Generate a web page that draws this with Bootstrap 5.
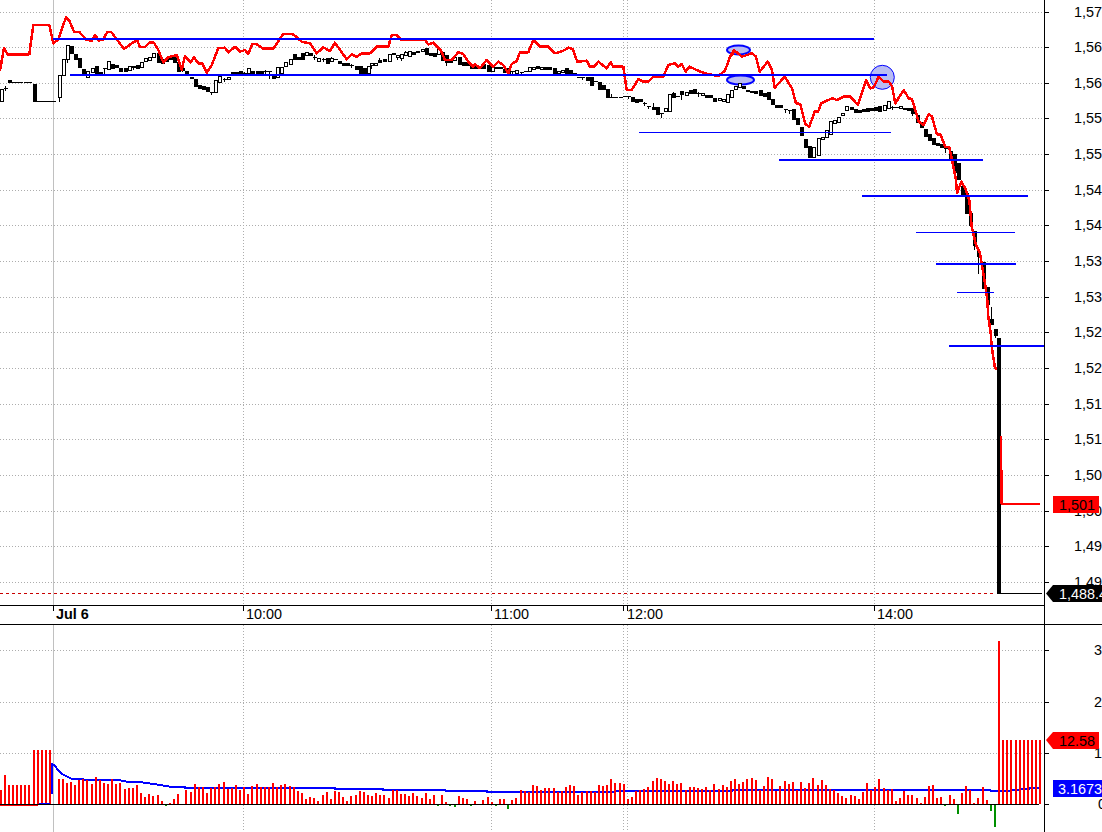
<!DOCTYPE html>
<html lang="en">
<head>
<meta charset="utf-8">
<title>Jul 6 intraday chart</title>
<link href="https://cdn.jsdelivr.net/npm/bootstrap@5.3.0/dist/css/bootstrap.min.css" rel="stylesheet">
<style>
html,body{margin:0;background:#fff;overflow:hidden}
.chart-frame{width:1102px;height:832px}
.chart-frame svg{width:1102px;height:832px}
.chart-frame text{font-family:"Liberation Sans",Arial,sans-serif;font-size:14.4px;dominant-baseline:central;fill:#000}
.chart-frame text.tb{font-weight:700}
.chart-frame text.tw{fill:#fff}
.grid-dot{stroke:#adadad;stroke-width:1;stroke-dasharray:1 2;fill:none;shape-rendering:crispEdges}
.axis-l{stroke:#000;stroke-width:1;fill:none;shape-rendering:crispEdges}
.first-day{stroke:#c0c0c0;stroke-width:1;shape-rendering:crispEdges}
.lvl{stroke:#0000ff;fill:none;shape-rendering:crispEdges}
.lvl-2{stroke-width:2}
.lvl-1{stroke-width:1}
.spot{fill:#b9bcf2;stroke:#0000ff}
.redline{stroke:#ff0000;stroke-width:2.5;fill:none;stroke-linejoin:round;shape-rendering:crispEdges}
.redline-thin{stroke:#ff0000;stroke-width:2;fill:none;shape-rendering:crispEdges}
.volma{stroke:#0000ff;stroke-width:2;fill:none;shape-rendering:crispEdges}
.crisp{shape-rendering:crispEdges}
.dash-last{stroke:#c80000;stroke-width:1;stroke-dasharray:3 3;shape-rendering:crispEdges}
</style>
</head>
<body>
<div class="chart-frame bg-white position-relative overflow-hidden">
<svg class="d-block" viewBox="0 0 1102 832" xmlns="http://www.w3.org/2000/svg">
  <g id="grid"></g>
  <line class="first-day" x1="53.5" y1="0" x2="53.5" y2="605"/>
  <line class="first-day" x1="53.5" y1="624" x2="53.5" y2="832"/>
  <ellipse class="spot" stroke-width="2" cx="738.5" cy="50" rx="11.5" ry="4.5"/>
  <ellipse class="spot" stroke-width="2" cx="740.5" cy="80" rx="13.5" ry="4.5"/>
  <circle class="spot" stroke-width="1" cx="882.3" cy="77.3" r="12"/>
  <line class="dash-last" x1="0" y1="593.5" x2="996" y2="593.5"/>
  <g id="candles" class="crisp"></g>
  <polyline id="red" class="redline"/>
  <path class="redline-thin" d="M1001 436V504"/>
  <path class="redline-thin" d="M1002 470V504H1040"/>
  <path class="axis-l" d="M997 593.5H1042"/>
  <g id="levels">
    <line class="lvl lvl-2" x1="53" y1="39" x2="874" y2="39"/>
    <line class="lvl lvl-2" x1="70" y1="75" x2="887" y2="75"/>
    <line class="lvl lvl-1" x1="639" y1="132.5" x2="891" y2="132.5"/>
    <line class="lvl lvl-2" x1="779" y1="160" x2="983" y2="160"/>
    <line class="lvl lvl-2" x1="862" y1="196" x2="1028" y2="196"/>
    <line class="lvl lvl-1" x1="916" y1="232.5" x2="1015" y2="232.5"/>
    <line class="lvl lvl-2" x1="936" y1="264" x2="1016" y2="264"/>
    <line class="lvl lvl-1" x1="957" y1="292.5" x2="994" y2="292.5"/>
    <line class="lvl lvl-2" x1="949" y1="346" x2="1044" y2="346"/>
  </g>
  <path id="volma" class="volma"/>
  <g id="vol" class="crisp"></g>
  <path class="axis-l" d="M0 804.5H1039" stroke-width="1"/>
  <rect class="crisp" x="0" y="805" width="38" height="1" fill="#ff0000"/>
  <rect class="crisp" x="39" y="803" width="11" height="1" fill="#0000ff"/>
  <path class="axis-l" d="M1044.5 0V832M0 605.5H1044.5M0 624.5H1102"/>
  <path id="ticks" class="axis-l"/>
  <g id="labels"></g>
  <text x="56" y="614" class="tb">Jul 6</text>
  <text x="246" y="614">10:00</text>
  <text x="494" y="614">11:00</text>
  <text x="627" y="614">12:00</text>
  <text x="877" y="614">14:00</text>
  <text x="1094" y="650">30</text>
  <text x="1094" y="702">20</text>
  <text x="1094" y="753">10</text>
  <text x="1098" y="804">0</text>
  <rect class="crisp" x="1053" y="496" width="46" height="17" fill="#ff0000"/>
  <text x="1059" y="505">1,501</text>
  <polygon points="1046,593.5 1053,585 1102,585 1102,602 1053,602" fill="#000"/>
  <text x="1059" y="594" class="tw">1,488.4</text>
  <polygon points="1046,740 1053,732 1099,732 1099,749 1053,749" fill="#ff0000"/>
  <text x="1059" y="741">12.58</text>
  <rect class="crisp" x="1053" y="780" width="49" height="17" fill="#0000ff"/>
  <text x="1058" y="788.5" class="tw">3.1673</text>
</svg>
</div>
<script src="https://cdn.jsdelivr.net/npm/bootstrap@5.3.0/dist/js/bootstrap.bundle.min.js"></script>
<script>
(function(){
  var ys=[];for(var i=0;i<17;i++)ys.push(Math.round(11.5+i*35.65));
  var lowY=[650,702,753];
  var vx=[243,491,623,627,874];
  var g='',t='',l='';
  ys.forEach(function(y,i){
    g+='<line class="grid-dot" x1="0" x2="1044" y1="'+(y+.5)+'" y2="'+(y+.5)+'"/>';
    t+='M1045 '+(y+.5)+'H1049';
    var v=570-i*5;
    l+='<text x="1074" y="'+y+'">1,'+v+'</text>';
  });
  lowY.forEach(function(y){g+='<line class="grid-dot" x1="0" x2="1044" y1="'+(y+.5)+'" y2="'+(y+.5)+'"/>';t+='M1045 '+(y+.5)+'H1049';});
  t+='M1045 804.5H1049';
  vx.forEach(function(x){
    g+='<line class="grid-dot" x1="'+(x+.5)+'" x2="'+(x+.5)+'" y1="0" y2="605"/>';
    g+='<line class="grid-dot" x1="'+(x+.5)+'" x2="'+(x+.5)+'" y1="625" y2="832"/>';
    t+='M'+(x+.5)+' 605V611';
  });
  t+='M53.5 605V611';
  document.getElementById('grid').innerHTML=g;
  document.getElementById('ticks').setAttribute('d',t);
  document.getElementById('labels').innerHTML=l;

  /* red price line, sampled per crop: [x,y] in 3x units */
  function pts(ox,oy,a){var o=[];for(var i=0;i<a.length;i+=2)o.push((ox+a[i]/3).toFixed(1)+','+(oy+a[i+1]/3).toFixed(1));return o;}
  var r=[].concat(
   pts(0,0,[0,212,12,143,22,163,88,163,100,75,148,75,160,130,175,118,198,52,208,62,222,95,238,96,260,120,276,122,285,104,296,122,310,118,322,96,334,96,372,147,400,127,412,122,420,141,435,141,448,128,462,128,475,150,490,187,505,172,530,165,545,210,555,168,572,187,582,172,595,190,607,190,620,218,635,195,655,145,675,143,685,157,705,140,720,155,735,150,745,162,757,132,768,132,790,146,820,146,850,102,880,103,905,125,930,130,950,160,970,142,990,153,1005,128,1040,178,1055,163,1070,170,1085,160,1110,160]),
   pts(370,0,[20,140,55,140,65,105,80,105,95,120,165,120,175,133,190,128,212,150,225,180,245,180,265,157,280,162,295,185,310,200,315,192,330,205,350,180,370,200,385,185,400,195,415,220,425,192,440,183,450,157,475,157,490,120,510,140,535,140,555,160,580,152,595,143,608,147,622,185,650,182,660,200,672,200,685,185,710,205,722,187,730,200,760,200,770,270,785,270,805,238,820,245,835,245,850,230,880,230,895,195,915,190,925,200,935,192,947,215,958,200,985,212,1005,220,1045,228,1065,212,1080,170,1092,150]),
   pts(732,0,[0,165,8,152,30,170,60,160,72,170,83,215,107,185,120,210,128,263,158,230,180,265,192,310,205,312,220,372,232,380,248,335,258,335,268,310,300,295,315,300,335,290,355,290,378,315,402,240,415,265,425,262,440,230,455,245,470,245,480,258,490,310,515,270,530,295,540,297,560,365,575,375,590,342,600,350,615,403,625,403,640,440,652,442,660,480,672,540,675,580,688,545,700,565,712,600]),
   pts(900,200,[215,80,228,135,240,160,255,250,262,300,265,350,272,400,275,440,285,505,292,505])
  );
  document.getElementById('red').setAttribute('points',r.join(' '));

  /* candles: x,top,bottom,filled,[wickTop,wickBottom] in 3x units */
  var C0=[[3,268,304,0],[14,263,263,1,255,270],[27,240,247,1],[101,252,304,1],[176,226,292,0,226,304],[189,178,226,0],[201,136,178,0,136,185],[212,138,158,1],[225,162,177,1],[237,174,200,1],[250,208,222,1],[262,214,232,0],[275,205,215,0],[288,198,218,1],[300,216,222,1],[312,205,205,1,205,218],[324,183,207,0],[336,192,205,1],[348,196,200,1],[360,205,212,1],[375,205,212,1],[387,198,210,0],[399,198,202,1,194,206],[411,195,203,1],[423,187,200,0],[435,175,183,0],[447,172,180,0],[459,160,172,0],[474,158,187,1],[486,178,188,1],[498,178,184,1],[510,172,178,1],[522,172,186,1],[534,187,212,1],[546,205,210,1,198,214],[558,213,221,1],[573,231,235,1],[585,236,257,1],[597,254,265,1],[609,258,266,1],[621,262,272,1],[633,275,275,1,272,282],[645,240,275,0],[657,228,245,0],[672,237,237,1,230,242],[684,232,238,0],[696,215,220,1],[708,215,220,1],[720,212,220,1],[732,218,218,1,212,224],[744,205,218,0],[756,212,220,1],[771,213,220,1],[783,212,220,1],[795,212,212,1,208,224],[807,212,212,1,212,235],[819,225,235,1],[831,202,230,0],[843,202,220,0],[855,187,197,0],[870,178,193,0],[882,163,177,1],[894,170,176,1],[906,160,176,1],[918,157,166,0,152,166],[930,160,166,1],[942,170,170,1,162,178],[954,175,184,0],[969,178,178,1,170,184],[981,175,190,1],[993,175,182,0,168,182],[1005,178,178,1],[1017,183,190,1],[1029,190,194,1],[1041,190,194,1],[1053,195,195,1,190,202],[1068,198,207,1],[1080,198,218,1],[1092,205,218,1],[1104,198,218,0]];
  var C1=[[3,190,195,0,190,205],[15,188,194,0],[28,180,187,1,172,187],[42,178,182,1],[57,163,182,0],[69,160,163,1],[81,165,172,0,165,178],[93,163,174,0,163,180],[105,155,165,0,150,165],[117,152,167,0],[129,155,162,1],[141,152,155,1],[156,148,153,0],[168,145,163,1],[180,160,164,1],[192,160,167,1],[204,147,163,0],[216,155,180,1],[228,165,187,1,165,195],[240,182,186,1],[252,172,180,0],[267,172,192,1],[279,187,195,1],[291,187,195,1],[303,195,203,1],[315,198,205,1],[327,198,205,1],[339,192,205,1],[354,195,212,1],[366,200,212,0],[378,200,205,1],[390,200,205,1],[402,207,216,1],[414,205,222,0],[426,212,212,1,212,220],[438,210,218,0],[453,215,215,1,215,222],[465,212,212,1],[477,202,212,0],[489,200,207,0],[501,197,205,1],[513,200,207,0],[525,202,208,1],[537,202,208,1],[552,205,222,1],[564,212,218,0],[576,210,215,0],[588,205,222,1],[600,210,222,1],[612,220,220,1],[624,230,230,1],[636,230,230,1,230,237],[651,230,240,1],[663,232,255,1],[675,243,243,1],[687,245,267,1],[699,255,267,1],[711,268,290,1],[723,292,292,1,280,292],[735,292,292,1],[750,292,292,1],[762,287,287,1],[774,287,287,1,287,295],[786,290,302,1],[798,298,305,1],[810,297,303,1],[822,310,310,1,303,316],[834,318,318,1,318,323],[849,322,328,1,305,328],[861,322,342,1],[873,338,338,1,338,352],[885,325,332,0],[897,283,332,0],[909,280,290,1,272,290],[921,288,288,1],[933,273,282,1,273,296],[948,275,285,0],[960,270,280,1],[972,268,280,1],[984,278,278,1,272,288],[996,278,285,0],[1008,285,290,1],[1020,285,290,1],[1032,295,302,1],[1047,293,300,0],[1059,298,304,0],[1071,283,307,0],[1083,270,290,0]];
  var C2=[[9,258,268,0],[20,250,262,0],[33,257,265,1],[45,270,274,1],[57,273,276,1],[69,272,280,1],[84,270,285,1],[96,280,287,1],[108,275,297,1],[120,296,312,1],[132,316,320,1],[144,316,320,1],[159,328,328,1,328,336],[171,330,330,1,330,338],[183,328,358,1],[195,355,373,1],[207,382,404,1],[219,418,440,1],[231,438,472,1],[243,440,472,0],[258,415,465,0],[270,410,418,0],[282,390,412,0],[294,362,402,0],[306,360,368,0],[318,350,366,0],[330,338,345,0],[342,318,330,0],[357,320,328,1],[369,327,335,1],[381,330,336,1],[393,327,333,1],[405,325,332,1],[417,325,330,1],[429,322,330,1],[441,318,333,1],[456,316,330,0],[468,304,325,0],[480,320,320,1,314,326],[492,322,322,1],[504,318,324,0],[516,323,327,1],[528,325,330,1],[540,325,340,1,325,346],[555,345,365,1],[567,365,382,1],[579,388,408,1],[591,402,420,1],[603,415,433,1],[615,430,435,1],[627,433,440,1],[639,437,443,1,437,455],[654,454,478,1],[666,463,515,1],[678,490,538,1],[690,558,585,1],[702,580,600,1]];
  var C3=[[198,-21,40,1],[210,40,76,1],[222,94,136,1,94,146],[234,152,168,1,152,220],[249,187,265,1],[261,262,312,1],[273,356,372,1,318,372],[285,388,406,1,388,412]];
  var s='';
  function dc(ox,oy,a){
    a.forEach(function(c){
      var x=Math.round(ox+c[0]/3)+.5,t=Math.round(oy+c[1]/3)+.5,b=Math.round(oy+c[2]/3)+.5;
      if(c.length>4){s+='<line x1="'+x+'" x2="'+x+'" y1="'+(Math.round(oy+c[4]/3)+.5)+'" y2="'+(Math.round(oy+c[5]/3)+.5)+'" stroke="#000"/>';}
      if(b<=t+.1){s+='<line x1="'+(x-2)+'" x2="'+(x+2)+'" y1="'+t+'" y2="'+t+'" stroke="#000"/>';return;}
      s+='<rect x="'+(x-1.5)+'" y="'+t+'" width="3" height="'+(b-t)+'" fill="'+(c[3]?'#000':'#fff')+'" stroke="#000"/>';
    });
  }
  dc(0,0,C0);dc(370,0,C1);dc(732,0,C2);dc(900,200,C3);
  s+='<path d="M10 82.5H23M24 82.5H32M37 101.5H56" stroke="#000" fill="none"/>';
  s+='<rect x="997" y="338" width="4" height="256" fill="#000"/>';
  document.getElementById('candles').innerHTML=s;

  /* volume bars: x,top in 3x units, baseline 642 */
  var V0=[3,600,15,555,27,585,39,585,51,585,63,585,75,585,87,585,101,480,113,480,125,480,137,480,149,480,177,567,189,567,201,579,213,576,225,585,237,570,249,567,261,570,275,582,288,561,300,570,312,579,324,582,336,567,348,582,360,579,375,597,387,594,399,594,411,585,423,609,435,621,447,612,459,618,473,615,486,633,498,644,510,639,522,627,534,612,558,600,572,606,585,582,597,591,609,591,621,609,633,594,645,591,657,582,671,576,684,597,696,594,708,585,720,600,732,591,744,612,756,588,770,582,783,591,795,591,807,591,819,579,831,591,843,585,855,582,869,588,882,591,894,603,906,609,918,627,930,621,942,624,954,633,969,615,981,606,993,627,1005,603,1017,606,1029,621,1041,633,1053,618,1067,615,1080,603,1092,606,1104,615];
  var V1=[6,618,18,609,30,615,42,615,57,624,69,600,81,600,93,612,105,612,117,618,129,609,141,618,156,624,168,609,180,627,192,615,204,644,216,615,228,636,240,644,254,651,267,618,279,624,291,627,303,644,315,633,339,630,354,621,366,636,379,644,390,627,402,627,414,657,426,630,438,624,453,600,465,603,477,606,489,585,501,588,513,600,525,594,537,594,552,594,564,606,576,603,588,591,600,585,612,588,624,615,636,606,651,603,663,603,675,606,687,585,699,588,711,585,723,567,735,579,750,579,762,582,774,627,786,621,798,603,810,600,822,597,834,591,849,573,861,564,873,567,885,573,897,582,909,573,921,582,933,579,948,600,960,591,972,591,984,594,996,597,1008,591,1020,600,1032,582,1047,597,1059,585,1071,591,1083,573,1095,567,1107,582];
  var V2=[33,576,45,567,60,564,72,570,84,600,96,588,108,561,120,567,132,603,144,588,159,573,171,582,183,576,195,600,207,576,219,594,231,579,243,564,258,585,270,570,282,585,294,597,306,600,318,609,330,618,342,624,357,615,369,618,381,627,393,606,405,579,417,600,429,591,441,567,456,594,468,600,480,597,492,633,504,624,516,603,528,615,540,615,555,624,567,639,579,621,591,588,603,585,615,624,627,621,639,644,654,615,666,627,678,672,690,609,702,588,714,600,726,639,738,624,753,591,765,630,777,662,789,711,801,153,813,450,825,450,837,450,852,450,864,450,876,450,888,450,900,450,912,450,924,450];
  var h='';
  function dv(ox,a){
    for(var i=0;i<a.length;i+=2){
      var x=Math.round(ox+a[i]/3)-1,top=590+a[i+1]/3;
      if(a[i+1]>642){h+='<rect x="'+x+'" y="805" width="2" height="'+Math.max(1,Math.round(top-805))+'" fill="#009000"/>';}
      else{h+='<rect x="'+x+'" y="'+Math.round(top)+'" width="2" height="'+(804-Math.round(top))+'" fill="#ff0000"/>';}
    }
  }
  dv(0,V0);dv(370,V1);dv(732,V2);
  document.getElementById('vol').innerHTML=h;

  /* volume average stepped line */
  var m=[].concat(
    pts(0,590,[157,612,157,523,165,527,175,542,190,554,215,566,260,569,355,570,385,576,420,576,445,580,480,585,510,590,555,590,556,593,900,593,905,593,1005,593,1005,596,1110,596]),
    pts(370,590,[40,596,40,599,225,599,228,603,352,603,352,606,735,606,738,603,1086,603]),
    pts(732,590,[0,600,775,600,776,603,835,603,838,600,890,597,892,594,920,594])
  );
  document.getElementById('volma').setAttribute('d','M'+m.join('L'));
})();
</script>
</body>
</html>
